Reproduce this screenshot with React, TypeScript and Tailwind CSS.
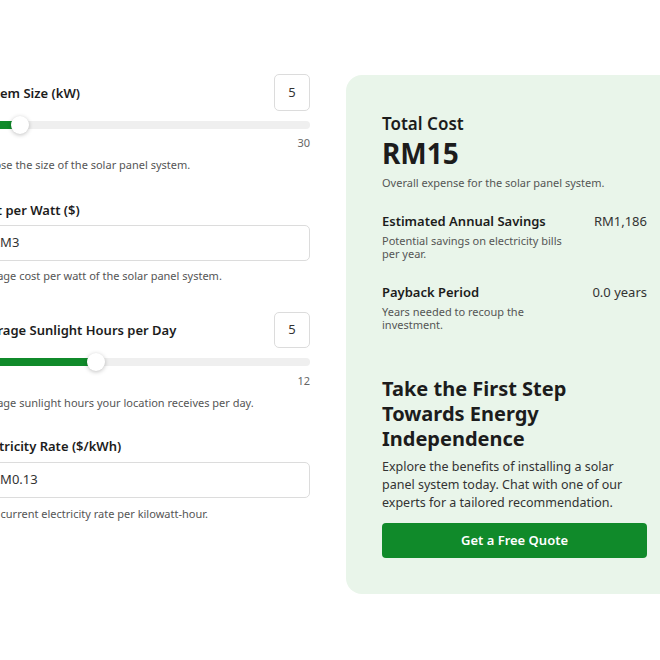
import { useState } from "react";

const font = { fontFamily: '"Noto Sans", "Open Sans", Arial, sans-serif' };

function Slider({ value, min, max }: { value: number; min: number; max: number }) {
  const pct = ((value - min) / (max - min)) * 100;
  return (
    <div className="relative h-2 w-full rounded-full bg-[#efefef]">
      <div className="h-2 rounded-l-full bg-[#108a2a]" style={{ width: `${pct}%` }} />
      <div
        className="absolute top-1/2 h-[18px] w-[18px] -translate-x-1/2 -translate-y-1/2 rounded-full bg-white shadow-[0_1px_4px_rgba(0,0,0,0.25)]"
        style={{ left: `${pct}%` }}
      />
    </div>
  );
}

export default function App() {
  const [size] = useState(5);
  const [hours] = useState(5);

  return (
    <div className="flex min-h-screen justify-center bg-white text-[#1c1c1c]" style={font}>
      <div className="flex w-[712px] shrink-0 items-start gap-9 pt-[74px]">
        {/* Inputs */}
        <div className="w-[336px] shrink-0">
          <div className="flex h-[37px] items-center justify-between">
            <span className="pt-[2px] text-[13px] font-semibold">System Size (kW)</span>
            <div className="flex h-[37px] w-9 items-center justify-center rounded-[5px] border border-[#dcdcdc] text-[13px] text-[#333]">
              {size}
            </div>
          </div>
          <div className="mt-[10px]">
            <Slider value={size} min={1} max={30} />
          </div>
          <div className="mt-[6px] text-right text-[11px] leading-4 text-[#666]">30</div>
          <p className="mt-[6px] text-[11px] leading-4 text-[#555]">Choose the size of the solar panel system.</p>

          <div className="mt-[27px] text-[13px] font-semibold leading-5">Cost per Watt ($)</div>
          <div className="mt-[5px] flex h-9 items-center rounded-[5px] border border-[#dcdcdc] px-[17px] text-[13px] text-[#333]">
            RM3
          </div>
          <p className="mt-[7px] text-[11px] leading-4 text-[#555]">Average cost per watt of the solar panel system.</p>

          <div className="mt-[28px] flex h-9 items-center justify-between">
            <span className="pt-[2px] text-[13px] font-semibold">Average Sunlight Hours per Day</span>
            <div className="flex h-9 w-9 items-center justify-center rounded-[5px] border border-[#dcdcdc] text-[13px] text-[#333]">
              {hours}
            </div>
          </div>
          <div className="mt-[10px]">
            <Slider value={hours} min={1} max={12} />
          </div>
          <div className="mt-[7px] text-right text-[11px] leading-4 text-[#666]">12</div>
          <p className="mt-[6px] text-[11px] leading-4 text-[#555]">Average sunlight hours your location receives per day.</p>

          <div className="mt-[25px] text-[13px] font-semibold leading-5">Electricity Rate ($/kWh)</div>
          <div className="mt-[6px] flex h-9 items-center rounded-[5px] border border-[#dcdcdc] px-[17px] text-[13px] text-[#333]">
            RM0.13
          </div>
          <p className="mt-[8px] text-[11px] leading-4 text-[#555]">Your current electricity rate per kilowatt-hour.</p>
        </div>

        {/* Results card */}
        <div className="mt-px w-[337px] shrink-0 rounded-2xl bg-[#e9f5ea] px-9 pt-9 pb-9">
          <div className="pt-px text-[17px] font-semibold leading-6">Total Cost</div>
          <div className="text-[28px] font-bold leading-[34px]">RM15</div>
          <p className="mt-[5px] text-[11px] leading-4 text-[#555]">Overall expense for the solar panel system.</p>

          <div className="mt-5 flex justify-between">
            <div className="w-[185px]">
              <div className="text-[13px] font-semibold leading-5">Estimated Annual Savings</div>
              <p className="mt-[3px] text-[11px] leading-[13px] text-[#555]">Potential savings on electricity bills per year.</p>
            </div>
            <div className="text-[13px] leading-5 text-[#333]">RM1,186</div>
          </div>

          <div className="mt-[22px] flex justify-between">
            <div className="w-[185px]">
              <div className="text-[13px] font-semibold leading-5">Payback Period</div>
              <p className="mt-[3px] text-[11px] leading-[13px] text-[#555]">Years needed to recoup the investment.</p>
            </div>
            <div className="text-[13px] leading-5 text-[#333]">0.0 years</div>
          </div>

          <h2 className="mt-[45px] text-[20px] font-bold leading-[25px]">
            Take the First Step Towards Energy Independence
          </h2>
          <p className="mt-[7px] text-[12.5px] leading-[18px] text-[#333]">
            Explore the benefits of installing a solar panel system today. Chat with one of our experts for a tailored
            recommendation.
          </p>
          <button className="mt-[11px] h-[35px] w-full rounded-[4px] bg-[#108a2a] text-[13px] font-semibold text-white">
            Get a Free Quote
          </button>
        </div>
      </div>
    </div>
  );
}
